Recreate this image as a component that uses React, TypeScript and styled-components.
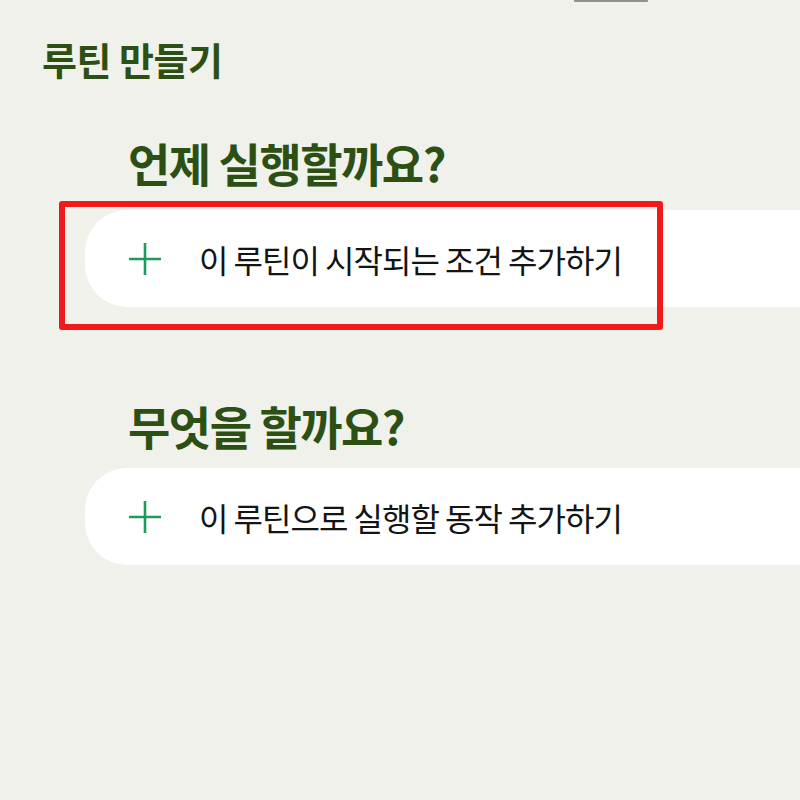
import React from "react";
import styled, { createGlobalStyle } from "styled-components";

const GlobalStyle = createGlobalStyle`
  html, body {
    margin: 0;
    padding: 0;
    background: #eff1ea;
  }
  body {
    font-family: "Noto Sans CJK KR", "Noto Sans", sans-serif;
  }
`;

const Page = styled.div`
  width: 800px;
  height: 800px;
  overflow: hidden;
  display: flex;
  flex-direction: column;
`;

const TopHandle = styled.div`
  margin-left: 574px;
  width: 74px;
  height: 2px;
  background: #8f948a;
  border-radius: 0 0 1px 1px;
`;

const PageTitle = styled.h1`
  margin: 31px 0 0 42px;
  font-size: 38px;
  line-height: 52px;
  font-weight: 700;
  letter-spacing: -0.5px;
  color: #2c5014;
`;

const Section = styled.section<{ $top: number }>`
  margin-top: ${(p) => p.$top}px;
  display: flex;
  flex-direction: column;
`;

const SectionTitle = styled.h2<{ $gap: number }>`
  margin: 0 0 ${(p) => p.$gap}px 128px;
  font-size: 46px;
  line-height: 60px;
  font-weight: 700;
  letter-spacing: -1.5px;
  color: #2c5014;
`;

const CardWrap = styled.div`
  position: relative;
  margin-left: 85px;
`;

const Card = styled.button`
  width: 100%;
  height: 97px;
  border: none;
  border-radius: 42px 0 0 42px;
  background: #ffffff;
  display: flex;
  align-items: center;
  gap: 38px;
  padding: 0 0 0 44px;
  font-family: inherit;
  cursor: pointer;
  text-align: left;
`;

const CardLabel = styled.span`
  font-size: 32px;
  font-weight: 400;
  letter-spacing: -1px;
  color: #141414;
`;

const Highlight = styled.div`
  position: absolute;
  left: -26px;
  top: -9px;
  width: 604px;
  height: 129px;
  box-sizing: border-box;
  border: 6px solid #f01a1c;
  border-radius: 3px;
  pointer-events: none;
`;

const PlusIcon = () => (
  <svg width="32" height="32" viewBox="0 0 32 32" fill="none">
    <path
      d="M16 0V32M0 16H32"
      stroke="#1d9a5c"
      strokeWidth="2.6"
    />
  </svg>
);

type AddCardProps = {
  label: string;
  highlighted?: boolean;
};

const AddCard = (props: AddCardProps) => {
  return (
    <CardWrap>
      <Card>
        <PlusIcon />
        <CardLabel>{props.label}</CardLabel>
      </Card>
      {props.highlighted && <Highlight />}
    </CardWrap>
  );
};

const App = () => {
  return (
    <Page>
      <GlobalStyle />
      <TopHandle />
      <PageTitle>루틴 만들기</PageTitle>
      <Section $top={47}>
        <SectionTitle $gap={18}>언제 실행할까요?</SectionTitle>
        <AddCard label="이 루틴이 시작되는 조건 추가하기" highlighted />
      </Section>
      <Section $top={88}>
        <SectionTitle $gap={13}>무엇을 할까요?</SectionTitle>
        <AddCard label="이 루틴으로 실행할 동작 추가하기" />
      </Section>
    </Page>
  );
};

export default App;
